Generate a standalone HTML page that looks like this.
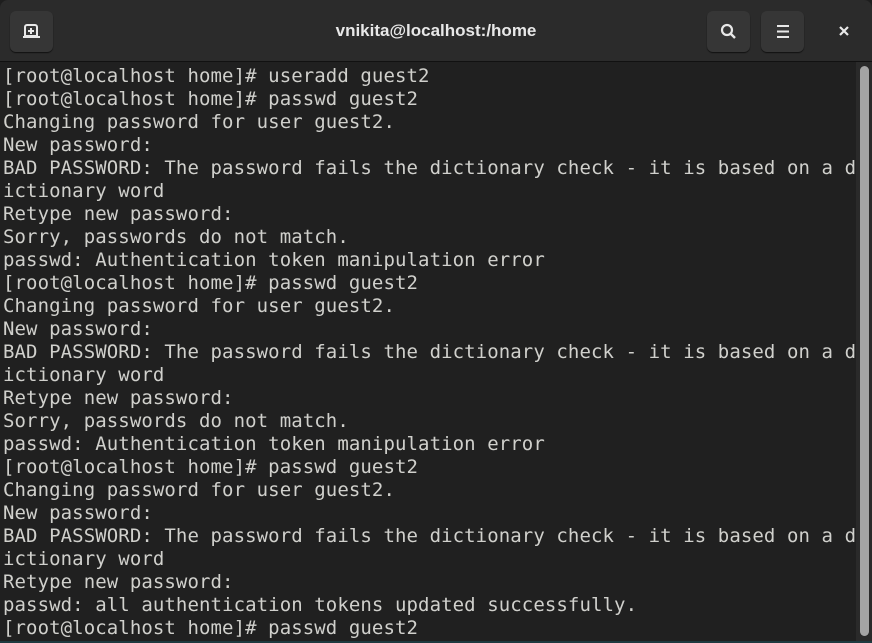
<!DOCTYPE html>
<html><head><style>
html,body{margin:0;padding:0;width:872px;height:643px;overflow:hidden;background:#1e1e1e}
.hdr{position:absolute;left:0;top:0;width:872px;height:61px;background:#2b2b2b;border-bottom:1px solid #111;border-radius:8px 8px 0 0}
.btn{position:absolute;top:11px;width:43px;height:41px;background:#363636;border-radius:6px;box-shadow:0 1px 1px #111}
.title{position:absolute;top:0;left:0;width:872px;text-align:center;color:#e8e8e8;font:bold 17px "Liberation Sans",sans-serif;line-height:62px}
.term{position:absolute;left:0;top:62px;width:856px;height:579px;background:#202020}
pre{margin:0;position:absolute;left:3px;top:65px;font:19px "DejaVu Sans Mono",monospace;line-height:23px;letter-spacing:0.09px;color:#d0d0cc}
.trough{position:absolute;left:856px;top:62px;width:16px;height:579px;background:#2a2a2a}
.slider{position:absolute;left:860px;top:66px;width:9px;height:570px;background:#a4a4a4;border-radius:5px}
.bot{position:absolute;left:0;top:641px;width:872px;height:2px;background:#1e3a40}
</style></head><body>
<div class="hdr">
<div class="btn" style="left:10px"><svg width="43" height="41" viewBox="0 0 43 41"><path d="M25 14h-8a2 2 0 0 0-2 2v9h12v-9a2 2 0 0 0-2-2z" fill="none" stroke="#e8e8e8" stroke-width="2"/><path d="M13 26h17" stroke="#e8e8e8" stroke-width="2"/><path d="M21 17v6M18 20h6" stroke="#e8e8e8" stroke-width="2"/></svg></div>
<div class="title">vnikita@localhost:/home</div>
<div class="btn" style="left:707px"><svg width="43" height="41" viewBox="0 0 43 41"><circle cx="20" cy="19" r="5" fill="none" stroke="#e8e8e8" stroke-width="2.2"/><path d="M24 23l4 4" stroke="#e8e8e8" stroke-width="2.4"/></svg></div>
<div class="btn" style="left:761px"><svg width="43" height="41" viewBox="0 0 43 41"><path d="M16 15h12M16 20.5h12M16 26h12" stroke="#e8e8e8" stroke-width="2"/></svg></div>
<svg style="position:absolute;left:836px;top:23px" width="16" height="16" viewBox="0 0 16 16"><path d="M4 4l8 8M12 4l-8 8" stroke="#e8e8e8" stroke-width="2.2"/></svg>
</div>
<div class="term"></div>
<pre>[root@localhost home]# useradd guest2
[root@localhost home]# passwd guest2
Changing password for user guest2.
New password:
BAD PASSWORD: The password fails the dictionary check - it is based on a d
ictionary word
Retype new password:
Sorry, passwords do not match.
passwd: Authentication token manipulation error
[root@localhost home]# passwd guest2
Changing password for user guest2.
New password:
BAD PASSWORD: The password fails the dictionary check - it is based on a d
ictionary word
Retype new password:
Sorry, passwords do not match.
passwd: Authentication token manipulation error
[root@localhost home]# passwd guest2
Changing password for user guest2.
New password:
BAD PASSWORD: The password fails the dictionary check - it is based on a d
ictionary word
Retype new password:
passwd: all authentication tokens updated successfully.
[root@localhost home]# passwd guest2</pre>
<div class="trough"></div><div class="slider"></div>
<div class="bot"></div>
</body></html>
